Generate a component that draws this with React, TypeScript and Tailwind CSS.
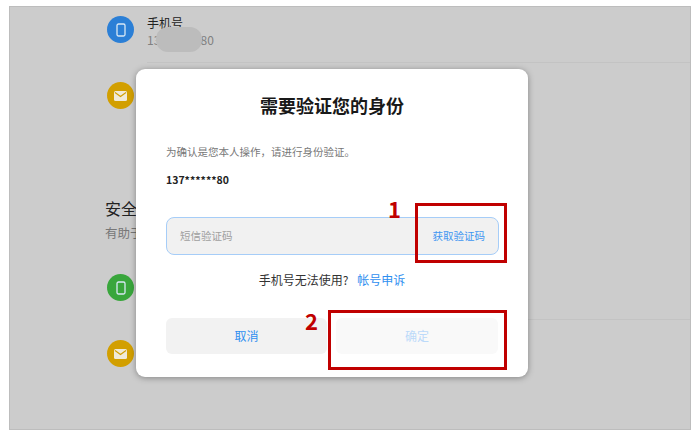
import React from "react";

const FONT = "font-['Noto_Sans_CJK_SC','Noto_Sans',sans-serif]";

function PhoneIcon() {
  return (
    <svg width="10" height="14" viewBox="0 0 10 14" fill="none">
      <rect x="1" y="1" width="8" height="12" rx="1.5" stroke="#d8e8f5" strokeWidth="1.3" />
    </svg>
  );
}

function MailIcon() {
  return (
    <svg width="13" height="10" viewBox="0 0 13 10">
      <rect width="13" height="10" rx="1.5" fill="#f0ead8" />
      <path d="M1 1.5 L6.5 5.5 L12 1.5" fill="none" stroke="#d29f00" strokeWidth="1.1" />
    </svg>
  );
}

function Dot({ color, children }: { color: string; children: React.ReactNode }) {
  return (
    <div className={`w-[27px] h-[27px] rounded-full flex items-center justify-center shrink-0 ${color}`}>
      {children}
    </div>
  );
}

export default function App() {
  return (
    <div className={`w-[697px] h-[434px] bg-white pt-[6px] pl-[9px] overflow-hidden ${FONT}`}>
      <div className="relative w-[682px] h-[424px] bg-[#cccccc] border border-[#bdbdbd] overflow-hidden">
        {/* page behind the dialog */}
        <div className="flex flex-col pl-[97px]">
          <div className="flex gap-[13px] h-[55px] pt-[9px]">
            <Dot color="bg-[#2b7fd6]"><PhoneIcon /></Dot>
            <div className="flex-1 border-b border-[#c3c3c3] h-[47px]">
              <div className="relative -top-[1px] text-[12px] leading-[16px] text-[#222222]">手机号</div>
              <div className="relative text-[12px] leading-[16px] text-[#808080] w-[68px]">
                137******80
                <div className="absolute left-[9px] top-[-5px] w-[46px] h-[25px] rounded-[12px] bg-[#bcbcbc]" />
              </div>
            </div>
          </div>
          <div className="mt-[20px]">
            <Dot color="bg-[#d29f00]"><MailIcon /></Dot>
          </div>
          <div className="mt-[88px] -ml-[2px] text-[16px] leading-[22px] text-[#222222]">安全</div>
          <div className="mt-[5px] -ml-[2px] text-[12.5px] leading-[18px] text-[#777777]">有助于</div>
          <div className="mt-[32px]">
            <Dot color="bg-[#39a63c]"><PhoneIcon /></Dot>
          </div>
          <div className="mt-[18px] ml-[40px] border-t border-[#c3c3c3]" />
          <div className="mt-[20px]">
            <Dot color="bg-[#d29f00]"><MailIcon /></Dot>
          </div>
        </div>

        {/* dialog */}
        <div className="absolute left-[126px] top-[62px] w-[392px] h-[308px] bg-white rounded-[9px] shadow-[0_1px_6px_rgba(0,0,0,0.35)] px-[30px] flex flex-col">
          <div className="mt-[23px] text-center text-[18px] leading-[26px] font-bold text-[#191919]">需要验证您的身份</div>
          <div className="mt-[26px] text-[10.5px] leading-[16px] text-[#777777]">为确认是您本人操作，请进行身份验证。</div>
          <div className="mt-[12px] text-[10.5px] leading-[16px] font-bold text-[#222222]">137******80</div>
          <div className="mt-[29px] w-[333px] h-[38px] rounded-[8px] border border-[#a6cdf8] bg-[#f1f1f1] flex items-center justify-between pl-[13px] pr-[13px]">
            <span className="text-[10.5px] text-[#a0a0a0]">短信验证码</span>
            <span className="text-[10.5px] text-[#3f96f2]">获取验证码</span>
          </div>
          <div className="mt-[15px] flex justify-center items-center gap-[9px] text-[12px] leading-[20px]">
            <span className="text-[#333333]">手机号无法使用?</span>
            <span className="text-[#2f8ff0]">帐号申诉</span>
          </div>
          <div className="mt-[28px] flex gap-[9px]">
            <button className="w-[161px] h-[36px] rounded-[6px] bg-[#f2f2f2] text-[12px] text-[#2f8ff0]">取消</button>
            <button className="w-[162px] h-[36px] rounded-[6px] bg-[#f9f9f9] text-[12px] text-[#bcdafa]">确定</button>
          </div>
        </div>

        {/* red annotations */}
        <div className="absolute left-[405px] top-[196px] w-[92px] h-[60px] border-[3px] border-[#c00000]" />
        <div className="absolute left-[318px] top-[303px] w-[179px] h-[60px] border-[3px] border-[#c00000]" />
        <div className="absolute left-[378px] top-[187px] text-[22px] leading-[28px] font-bold text-[#c00000]">1</div>
        <div className="absolute left-[295px] top-[299px] text-[22px] leading-[28px] font-bold text-[#c00000]">2</div>
      </div>
    </div>
  );
}
